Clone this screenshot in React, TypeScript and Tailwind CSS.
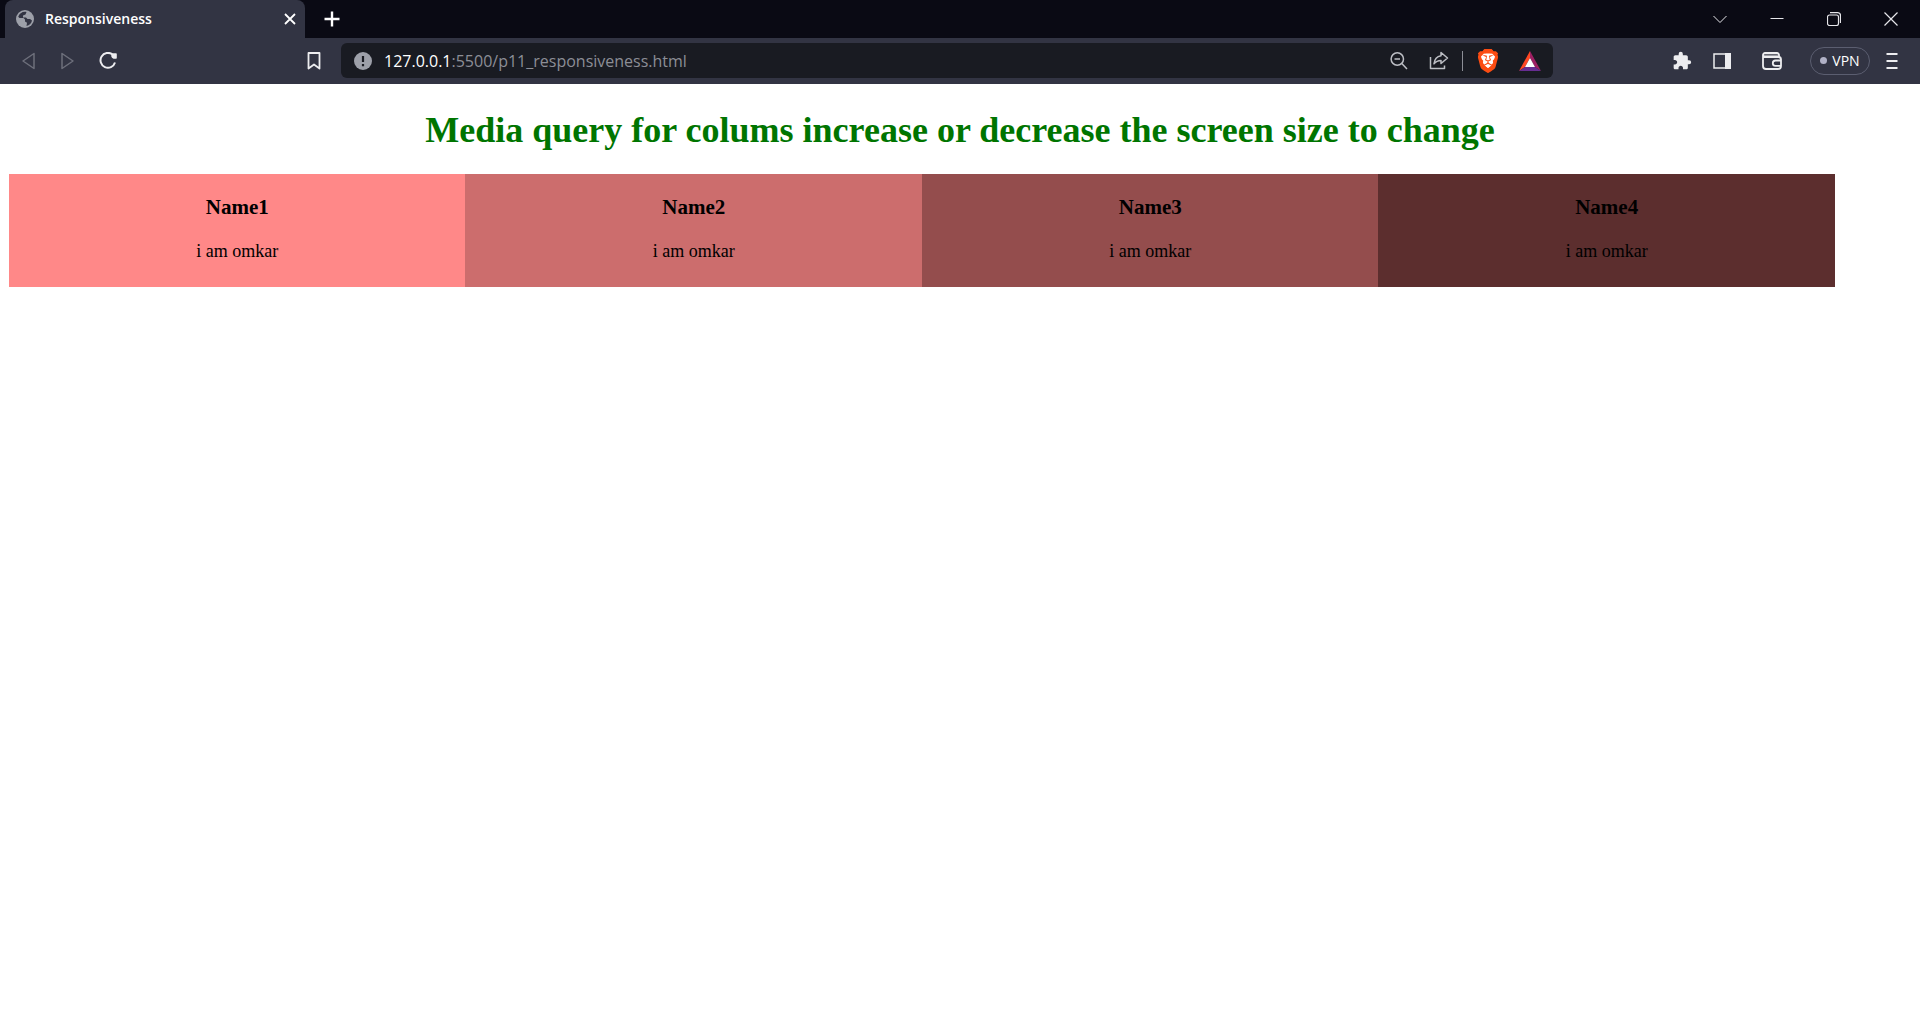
import React from "react";
import { SiBrave } from "react-icons/si";
import { MdExtension } from "react-icons/md";

const iconButton = "flex size-6 shrink-0 items-center justify-center";

const columns = [
  { name: "Name1", tone: "bg-[#ff8888]" },
  { name: "Name2", tone: "bg-[#cc6d6d]" },
  { name: "Name3", tone: "bg-[#944d4d]" },
  { name: "Name4", tone: "bg-[#5c2e2e]" },
];

function Stroke({ d, size = 18, width = 1.5 }: { d: string; size?: number; width?: number }) {
  return (
    <svg width={size} height={size} viewBox={`0 0 ${size} ${size}`} fill="none" stroke="currentColor" strokeWidth={width} strokeLinejoin="round" aria-hidden="true">
      <path d={d} />
    </svg>
  );
}

function TabStrip() {
  return (
    <div className="flex h-[38px] items-center bg-[#0a0a14] pl-[5px] text-white">
      <div className="flex h-full w-[300px] items-center rounded-t-lg bg-[#323443] pr-[7px] pl-[11px]">
        <svg width="18" height="18" viewBox="0 0 18 18" aria-hidden="true">
          <circle cx="9" cy="9" r="9" fill="#9da0a9" />
          <path d="M10.500 2C6.500 1.300 3.200 3.500 2.200 6.800L3.500 8h4l1.500 1.500v2l2 1.200-.5 3.300c3-.6 5-2.700 5.500-5.500l-2-1.500h-2.500L10 7.500H7V5.500l2.500-1z" fill="#323443" />
        </svg>
        <span className="ml-[11px] flex-1 font-['Open_Sans',sans-serif] text-sm font-semibold">Responsiveness</span>
        <button type="button" aria-label="Close tab" className="flex size-4 items-center justify-center">
          <Stroke size={12} width={1.8} d="M1 1l10 10m0-10l-10 10" />
        </button>
      </div>
      <button type="button" aria-label="New tab" className="ml-[18px] flex size-[18px] items-center justify-center">
        <Stroke size={16} width={2.4} d="M8 0.5v15M0.5 8h15" />
      </button>
      <div className="ml-auto flex text-[#e6e6ea]">
        <button type="button" aria-label="Search tabs" className="flex w-[57px] justify-center"><Stroke size={14} width={1} d="M0.5 4l6.5 6.5L13.5 4" /></button>
        <button type="button" aria-label="Minimize" className="flex w-[57px] justify-center"><Stroke size={14} width={1} d="M0.5 6.5h13" /></button>
        <button type="button" aria-label="Restore" className="flex w-[57px] justify-center"><Stroke size={14} width={1.2} d="M2.500 3h7a2 2 0 0 1 2 2v6.500a2 2 0 0 1-2 2h-7a2 2 0 0 1-2-2V5a2 2 0 0 1 2-2zM3 .7h7.500a3 3 0 0 1 3 3V11" /></button>
        <button type="button" aria-label="Close window" className="flex w-[58px] justify-center"><Stroke size={14} width={1.2} d="M0.5 0.5l13 13m0-13l-13 13" /></button>
      </div>
    </div>
  );
}

function Toolbar() {
  return (
    <div className="flex h-[46px] items-center bg-[#323443] pr-4 pl-4 pb-px text-[#ededf0]">
      <button type="button" aria-label="Back" className={`${iconButton} text-[#6d6f7b]`}><Stroke d="M15 1.500v15L4 9z" /></button>
      <button type="button" aria-label="Forward" className={`${iconButton} ml-4 text-[#6d6f7b]`}><Stroke d="M3 1.500v15L14 9z" /></button>
      <button type="button" aria-label="Reload" className={`${iconButton} ml-4`}>
        <svg width="18" height="18" viewBox="0 0 18 18" fill="none" aria-hidden="true">
          <path d="M13.500 2.500A7.400 7.400 0 1 0 16 10.500" stroke="currentColor" strokeWidth="2" />
          <path d="M13.500 1.300l3.300 0c.6 0 1 .4 1 1v3.400c0 .6-.4 1-1 1h-2.300a3 3 0 0 1-1-5.400z" fill="currentColor" />
        </svg>
      </button>
      <button type="button" aria-label="Bookmark this page" className={`${iconButton} ml-[182px]`}><Stroke width={1.8} d="M3.500 1h11v15.500L9 12.500l-5.500 4z" /></button>
      <div className="ml-[15px] flex h-[35px] flex-1 items-center rounded-md bg-[#191b22] pr-[11px] pl-[13px] text-[#bcbec4]">
        <svg width="18" height="18" viewBox="0 0 18 18" aria-hidden="true">
          <circle cx="9" cy="9" r="9" fill="#9da0a9" />
          <path d="M9 4v6M9 12v2.200" stroke="#191b22" strokeWidth="2.200" />
        </svg>
        <div className="ml-3 flex-1 font-['Open_Sans',sans-serif] text-base text-[#8c8e96]">
          <span className="text-white">127.0.0.1</span>:5500/p11_responsiveness.html
        </div>
        <button type="button" aria-label="Zoom" className={iconButton}><Stroke width={1.5} d="M13.500 7A6.200 6.200 0 1 1 1.100 7a6.200 6.200 0 0 1 12.400 0zM4.500 7h5.500M11.800 11.500l5.200 5.500" /></button>
        <button type="button" aria-label="Share" className={`${iconButton} ml-4`}><Stroke size={20} width={1.5} d="M1.500 6v11.500h14v-3M12 1.500l6.500 5.500L12 12.500V9.500c-3 0-5.200 1-7 3.300.5-4.500 3-7.300 7-8z" /></button>
        <span className="mr-[13px] ml-[11px] h-5 w-px bg-[#8c8e96]" />
        <button type="button" aria-label="Brave Shields" className={iconButton}>
          <svg width="20" height="24" viewBox="2 0 20 24" aria-hidden="true">
            <path d="M12 .5l4 .5 4.500 4.500-.3 5L17.500 19 12 23.500 6.500 19 3.800 10.500l-.3-5L8 1z" fill="#fb4c12" />
            <path d="M8 4.500h8l3 3-1 4-2 5-4 3-4-3-2-5-1-4z" fill="white" />
            <SiBrave x="0" y="0" size={24} color="#fb4c12" />
          </svg>
        </button>
        <button type="button" aria-label="Brave Rewards" className={`${iconButton} ml-[18px]`}>
          <svg width="22" height="20" viewBox="0 0 22 20" aria-hidden="true">
            <path d="M11 0v7L6 16 0 20z" fill="#ff4724" />
            <path d="M11 0l11 20-6-4L11 7z" fill="#9e1f63" />
            <path d="M0 20l6-4h10l6 4z" fill="#662d91" />
            <path d="M11 7l5 9H6z" fill="white" />
          </svg>
        </button>
      </div>
      <button type="button" aria-label="Extensions" className={`${iconButton} ml-[117px]`}><MdExtension className="size-5" /></button>
      <button type="button" aria-label="Side panel" className={`${iconButton} ml-4`}>
        <svg width="18" height="16" viewBox="0 0 18 16" aria-hidden="true"><path d="M1 1h16v14H1z" fill="none" stroke="currentColor" strokeWidth="1.500" /><path d="M12 0h6v16h-6z" fill="currentColor" /></svg>
      </button>
      <button type="button" aria-label="Wallet" className={`${iconButton} ml-[26px]`}>
        <svg width="20" height="18" viewBox="0 0 20 18" fill="none" stroke="currentColor" strokeWidth="1.800" aria-hidden="true">
          <path d="M2 2.500h14.500V5H2z" fill="#9a9ba3" stroke="none" />
          <path d="M17 5V3a2 2 0 0 0-2-2H3a2 2 0 0 0-2 2v11a3 3 0 0 0 3 3h12a3 3 0 0 0 3-3V7.500A2.500 2.500 0 0 0 16.500 5H3a2 2 0 0 1-2-2M19 8.500h-5.500a2.700 2.700 0 0 0 0 5.400H19" />
        </svg>
      </button>
      <button type="button" className="ml-[26px] flex h-7 w-[60px] items-center justify-center gap-[5px] rounded-full border border-[#5b5e70] font-['Open_Sans',sans-serif] text-sm text-white">
        <span className="size-[7px] rounded-full bg-[#b0b1c6]" />VPN
      </button>
      <button type="button" aria-label="Menu" className="ml-[10px] flex size-6 items-center justify-center"><Stroke size={16} width={1.8} d="M2.500 1h11M2.500 8h11M2.500 15h11" /></button>
    </div>
  );
}

export default function App() {
  return (
    <div className="min-h-screen bg-white">
      <header><TabStrip /><Toolbar /></header>
      <main className="pl-[9px] font-['Liberation_Serif',serif] text-black">
        <h1 className="pt-[25px] pr-[9px] pb-[23px] text-center text-4xl leading-[42px] font-bold text-[#007500]">
          Media query for colums increase or decrease the screen size to change
        </h1>
        <div className="grid w-[95.55%] grid-cols-4 text-center">
          {columns.map((c) => (
            <section key={c.name} className={`${c.tone} pt-[21px] pb-[25px]`}>
              <h3 className="text-[21px] leading-6 font-bold">{c.name}</h3>
              <p className="mt-[21px] text-lg leading-[22px]">i am omkar</p>
            </section>
          ))}
        </div>
      </main>
    </div>
  );
}
